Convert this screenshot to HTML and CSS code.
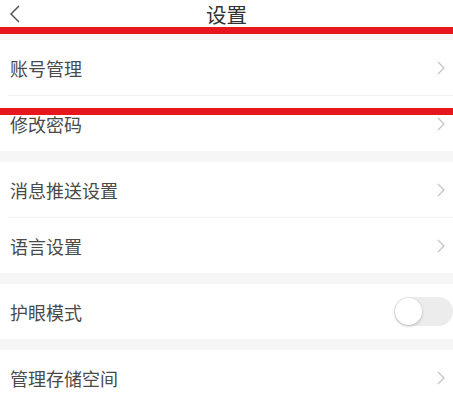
FILE: index.html
```html
<!DOCTYPE html>
<html lang="zh-CN">
<head>
    <meta charset="UTF-8">
    <meta name="viewport" content="width=device-width, initial-scale=1.0">
    <title>设置</title>
    <link rel="stylesheet" href="styles.css">
</head>
<body>
    <header class="topbar">
        <a href="#" class="back">
            <svg width="12" height="18" viewBox="0 0 12 18"><path d="M10 1 L2 9 L10 17" fill="none" stroke="#555" stroke-width="1.5"/></svg>
        </a>
        <h1>设置</h1>
    </header>

    <main>
        <!-- account -->
        <section class="group">
            <div class="row">
                <span>账号管理</span>
                <svg class="arrow" width="8" height="14" viewBox="0 0 8 14"><path d="M1 1 L7 7 L1 13" fill="none" stroke="#c4c4c4" stroke-width="1.3"/></svg>
            </div>
            <div class="row">
                <span>修改密码</span>
                <svg class="arrow" width="8" height="14" viewBox="0 0 8 14"><path d="M1 1 L7 7 L1 13" fill="none" stroke="#c4c4c4" stroke-width="1.3"/></svg>
            </div>
        </section>

        <!-- notices -->
        <section class="group">
            <div class="row">
                <span>消息推送设置</span>
                <svg class="arrow" width="8" height="14" viewBox="0 0 8 14"><path d="M1 1 L7 7 L1 13" fill="none" stroke="#c4c4c4" stroke-width="1.3"/></svg>
            </div>
            <div class="row">
                <span>语言设置</span>
                <svg class="arrow" width="8" height="14" viewBox="0 0 8 14"><path d="M1 1 L7 7 L1 13" fill="none" stroke="#c4c4c4" stroke-width="1.3"/></svg>
            </div>
        </section>

        <!-- eye care -->
        <section class="group">
            <div class="row">
                <span>护眼模式</span>
                <div class="switch"><div class="knob"></div></div>
            </div>
        </section>

        <!-- storage -->
        <section class="group">
            <div class="row">
                <span>管理存储空间</span>
                <svg class="arrow" width="8" height="14" viewBox="0 0 8 14"><path d="M1 1 L7 7 L1 13" fill="none" stroke="#c4c4c4" stroke-width="1.3"/></svg>
            </div>
        </section>
    </main>

    <!-- red marks over the page -->
    <div class="mark mark-top"></div>
    <div class="mark mark-bottom"></div>
</body>
</html>
```

FILE: styles.css
```css
body {
    font-family: "Noto Sans CJK SC", "Noto Sans", sans-serif;
    margin: 0;
    padding: 0;
    background-color: #f6f6f7;
    color: #4a4a4a;
    position: relative;
    overflow: hidden;
}
.topbar {
    height: 29px;
    background: #fff;
    display: flex;
    align-items: center;
    justify-content: center;
    position: relative;
}
.topbar h1 {
    margin: 0;
    font-size: 20.5px;
    font-weight: normal;
    color: #333;
    line-height: 29px;
}
.back {
    position: absolute;
    left: 9px;
    top: 5px;
    display: flex;
}
.group {
    background: #fff;
    margin-top: 11px;
}
.row {
    height: 55px;
    display: flex;
    align-items: center;
    justify-content: space-between;
    padding: 0 8px 0 10px;
    font-size: 18px;
    position: relative;
}
.row + .row {
    border-top: 1px solid #f1f1f1;
    margin-left: 8px;
    padding-left: 2px;
}
.switch {
    width: 59px;
    height: 29px;
    border-radius: 15px;
    background: #ececec;
    margin-right: -8px;
    position: relative;
}
.knob {
    position: absolute;
    left: 1px;
    top: 1px;
    width: 27px;
    height: 27px;
    border-radius: 50%;
    background: #fff;
    box-shadow: 0 1px 3px rgba(0, 0, 0, 0.25);
}
.mark {
    position: absolute;
    left: 0;
    width: 100%;
    height: 7px;
    background: #e8161f;
}
.mark-top {
    top: 27px;
}
.mark-bottom {
    top: 108px;
}
```
